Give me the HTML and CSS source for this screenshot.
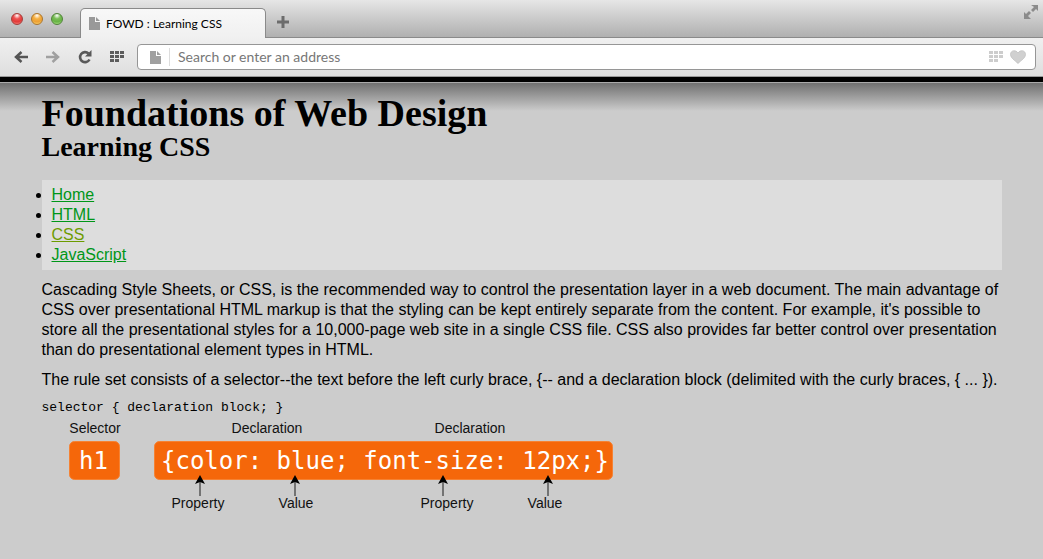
FILE: index.html
```html
<!DOCTYPE html>
<html lang="en">
<head>
<meta charset="utf-8">
<title>FOWD : Learning CSS</title>
<link rel="stylesheet" href="styles.css">
</head>
<body>
<header class="chrome">
  <div class="tabstrip">
    <div class="lights">
      <button class="light red" aria-label="Close"></button>
      <button class="light amber" aria-label="Minimize"></button>
      <button class="light green" aria-label="Zoom"></button>
    </div>
    <div class="tab">
      <svg width="11" height="13" viewBox="0 0 11 13"><path d="M0 0h6v5h5v8H0z M7 0l4 4H7z" fill="#999"/></svg>
      <span>FOWD : Learning CSS</span>
    </div>
    <button class="icon newtab" aria-label="New tab"><svg width="12" height="12" viewBox="0 0 12 12"><path d="M6 0v12M0 6h12" stroke="#6c6c6c" stroke-width="3"/></svg></button>
    <button class="icon expand" aria-label="Full screen"><svg width="16" height="16" viewBox="0 0 16 16"><path d="M8 1h7v6l-2-2-3 3-2-2 3-3zM1 8l2 2 3-3 2 2-3 3 3 3H1z" fill="#8b8b8b"/></svg></button>
  </div>
  <div class="toolbar">
    <button class="icon" aria-label="Back"><svg width="14" height="12" viewBox="0 0 14 12"><path d="M14 6H3M7.500 1L2 6l5.500 5" fill="none" stroke="#555" stroke-width="2.500"/></svg></button>
    <button class="icon" aria-label="Forward"><svg width="14" height="12" viewBox="0 0 14 12"><path d="M0 6h11M6.500 1L12 6l-5.500 5" fill="none" stroke="#a0a0a0" stroke-width="2.500"/></svg></button>
    <button class="icon" aria-label="Reload"><svg width="14" height="14" viewBox="0 0 14 14"><path d="M10.500 3.500A5 5 0 1 0 11.500 9.500" fill="none" stroke="#595959" stroke-width="2.600"/><path d="M13.500 0v6.500H7z" fill="#595959"/></svg></button>
    <button class="icon" aria-label="Speed Dial"><svg width="15" height="12" viewBox="0 0 15 12"><path d="M0 0h4v3H0zM5 0h4v3H5zM10 0h4v3h-4zM0 4h4v3H0zM5 4h4v3H5zM10 4h4v3h-4zM0 8h4v3H0zM5 8h4v3H5z" fill="#5c5c5c"/></svg></button>
    <div class="address">
      <svg class="page" width="11" height="13" viewBox="0 0 11 13"><path d="M0 0h6v5h5v8H0z M7 0l4 4H7z" fill="#a0a0a0"/></svg>
      <input type="text" aria-label="Address" placeholder="Search or enter an address">
      <button class="icon" aria-label="Add to Speed Dial"><svg width="15" height="12" viewBox="0 0 15 12"><path d="M0 0h4v3H0zM5 0h4v3H5zM10 0h4v3h-4zM0 4h4v3H0zM5 4h4v3H5zM10 4h4v3h-4zM0 8h4v3H0zM5 8h4v3H5z" fill="#cdcdcd"/></svg></button>
      <button class="icon" aria-label="Add to favorites"><svg width="16" height="14" viewBox="0 0 16 14"><path d="M8 13.500C5 10.500 .5 8 .5 4.500 .5 0 6 -.5 8 3c2-3.500 7.500-3 7.500 1.500C15.500 8 11 10.500 8 13.500z" fill="#d0d0d0" stroke="#bdbdbd" stroke-width=".7"/></svg></button>
    </div>
  </div>
</header>
<main class="viewport">
  <div class="content">
    <h1>Foundations of Web Design</h1>
    <h2>Learning CSS</h2>
    <nav>
      <ul class="menu">
        <li><a href="#home">Home</a></li>
        <li><a href="#html">HTML</a></li>
        <li><a class="current" href="#css">CSS</a></li>
        <li><a href="#javascript">JavaScript</a></li>
      </ul>
    </nav>
    <p>Cascading Style Sheets, or CSS, is the recommended way to control the presentation layer in a web document. The main advantage of CSS over presentational HTML markup is that the styling can be kept entirely separate from the content. For example, it's possible to store all the presentational styles for a 10,000-page web site in a single CSS file. CSS also provides far better control over presentation than do presentational element types in HTML.</p>
    <p>The rule set consists of a selector--the text before the left curly brace, {-- and a declaration block (delimited with the curly braces, { ... }).</p>
    <pre>selector { declaration block; }</pre>
    <svg class="diagram" width="600" height="100" viewBox="0 0 600 100" role="img" aria-label="Parts of a CSS rule">
      <g fill="#f5670a" stroke="#f58233">
        <rect x="27.500" y="25.500" width="50" height="38" rx="5"/>
        <rect x="112.500" y="25.500" width="458" height="38" rx="5"/>
      </g>
      <g class="snippet">
        <text x="37" y="53">h1</text>
        <text x="119" y="53">{color: blue; font-size: 12px;}</text>
      </g>
      <g class="label">
        <text x="53" y="17">Selector</text>
        <text x="225" y="17">Declaration</text>
        <text x="428" y="17">Declaration</text>
        <text x="156" y="92">Property</text>
        <text x="254" y="92">Value</text>
        <text x="405" y="92">Property</text>
        <text x="503" y="92">Value</text>
      </g>
      <path d="M158 66v14M253 66v14M401 66v14M506 66v14" stroke="#555" stroke-width="1.500"/>
      <path d="M158 59l5 9-5-2-5 2zM253 59l5 9-5-2-5 2zM401 59l5 9-5-2-5 2zM506 59l5 9-5-2-5 2z" fill="#000"/>
    </svg>
  </div>
</main>
</body>
</html>
```
FILE: styles.css
```css
* {
  box-sizing: border-box;
}

body {
  margin: 0;
  min-height: 100vh;
  display: flex;
  flex-direction: column;
  background: #ccc;
  color: #000;
  font: 16px/20px "Liberation Sans", Arial, sans-serif;
}

svg {
  display: block;
}

.icon {
  padding: 0;
  border: 0;
  background: none;
}

.chrome {
  font-family: Lato, sans-serif;
  border-bottom: 5px solid #000;
}

.tabstrip {
  display: flex;
  align-items: flex-end;
  height: 38px;
  padding-right: 4px;
  background: linear-gradient(#e6e6e6, #aeaeae);
  box-shadow: inset 0 -1px #8a8a8a;
}

.lights {
  display: flex;
  gap: 8px;
  align-self: center;
  padding: 0 17px 0 11px;
}

.light {
  width: 12px;
  height: 12px;
  padding: 0;
  border: 1px solid;
  border-radius: 50%;
}

.red {
  border-color: #a33c38;
  background: radial-gradient(circle at 50% 15%, #fff 0, #ee5151 35%, #e23a38 65%, #ff9c94);
}

.amber {
  border-color: #ab742b;
  background: radial-gradient(circle at 50% 15%, #fff 0, #f5b042 35%, #eda033 65%, #ffe883);
}

.green {
  border-color: #4f8238;
  background: radial-gradient(circle at 50% 15%, #fff 0, #79bd56 35%, #67b344 65%, #c4f29a);
}

.tab {
  display: flex;
  align-items: center;
  gap: 6px;
  width: 186px;
  height: 30px;
  padding: 0 8px;
  border: 1px solid #8a8a8a;
  border-bottom: 0;
  border-radius: 5px 5px 0 0;
  background: linear-gradient(#f8f8f8, #f0f0f0);
  font-size: 12px;
}

.newtab {
  align-self: center;
  margin: 6px 0 0 11px;
}

.expand {
  align-self: flex-start;
  margin: 4px 0 0 auto;
}

.toolbar {
  display: flex;
  align-items: center;
  gap: 18px;
  height: 39px;
  padding: 0 7px 0 14px;
  border-bottom: 1px solid #999;
  background: linear-gradient(#f0f0f0, #dedede);
}

.address {
  flex: 1;
  display: flex;
  align-items: center;
  gap: 6px;
  height: 26px;
  margin-left: -6px;
  padding: 0 9px 0 12px;
  border: 1px solid #969696;
  border-radius: 4px;
  background: #fff;
}

.address input {
  flex: 1;
  min-width: 0;
  height: 18px;
  margin-left: 2px;
  padding: 0 0 0 8px;
  border: 0;
  border-left: 1px solid #ddd;
  background: none;
  font: 14px/18px Lato, sans-serif;
}

.address input::placeholder {
  color: #777;
}

.viewport {
  flex: 1;
  padding: 10px 20px 20px;
  border-top: 1px solid #aaa;
  background: linear-gradient(#707070, #ccc 28px);
}

.content {
  max-width: 960px;
  margin: 0 auto;
}

h1,
h2 {
  margin: 0;
  font-family: Georgia, "Liberation Serif", serif;
}

h1 {
  font-size: 38px;
  line-height: 40px;
}

h2 {
  margin-bottom: 19px;
  font-size: 28px;
  line-height: 28px;
}

.menu {
  margin: 0;
  padding: 5px 10px;
  background: #ddd;
}

.menu a {
  color: #009618;
}

.menu .current {
  color: #6d9b00;
}

p {
  margin: 10px 0;
}

pre {
  margin: 0;
  font: 13px/16px "Liberation Mono", monospace;
}

.diagram {
  max-width: 100%;
}

.snippet {
  fill: #fff;
  font: 24px "DejaVu Sans Mono", monospace;
}

.label {
  fill: #111;
  font: 14px "Liberation Sans", Arial, sans-serif;
  text-anchor: middle;
}
```
